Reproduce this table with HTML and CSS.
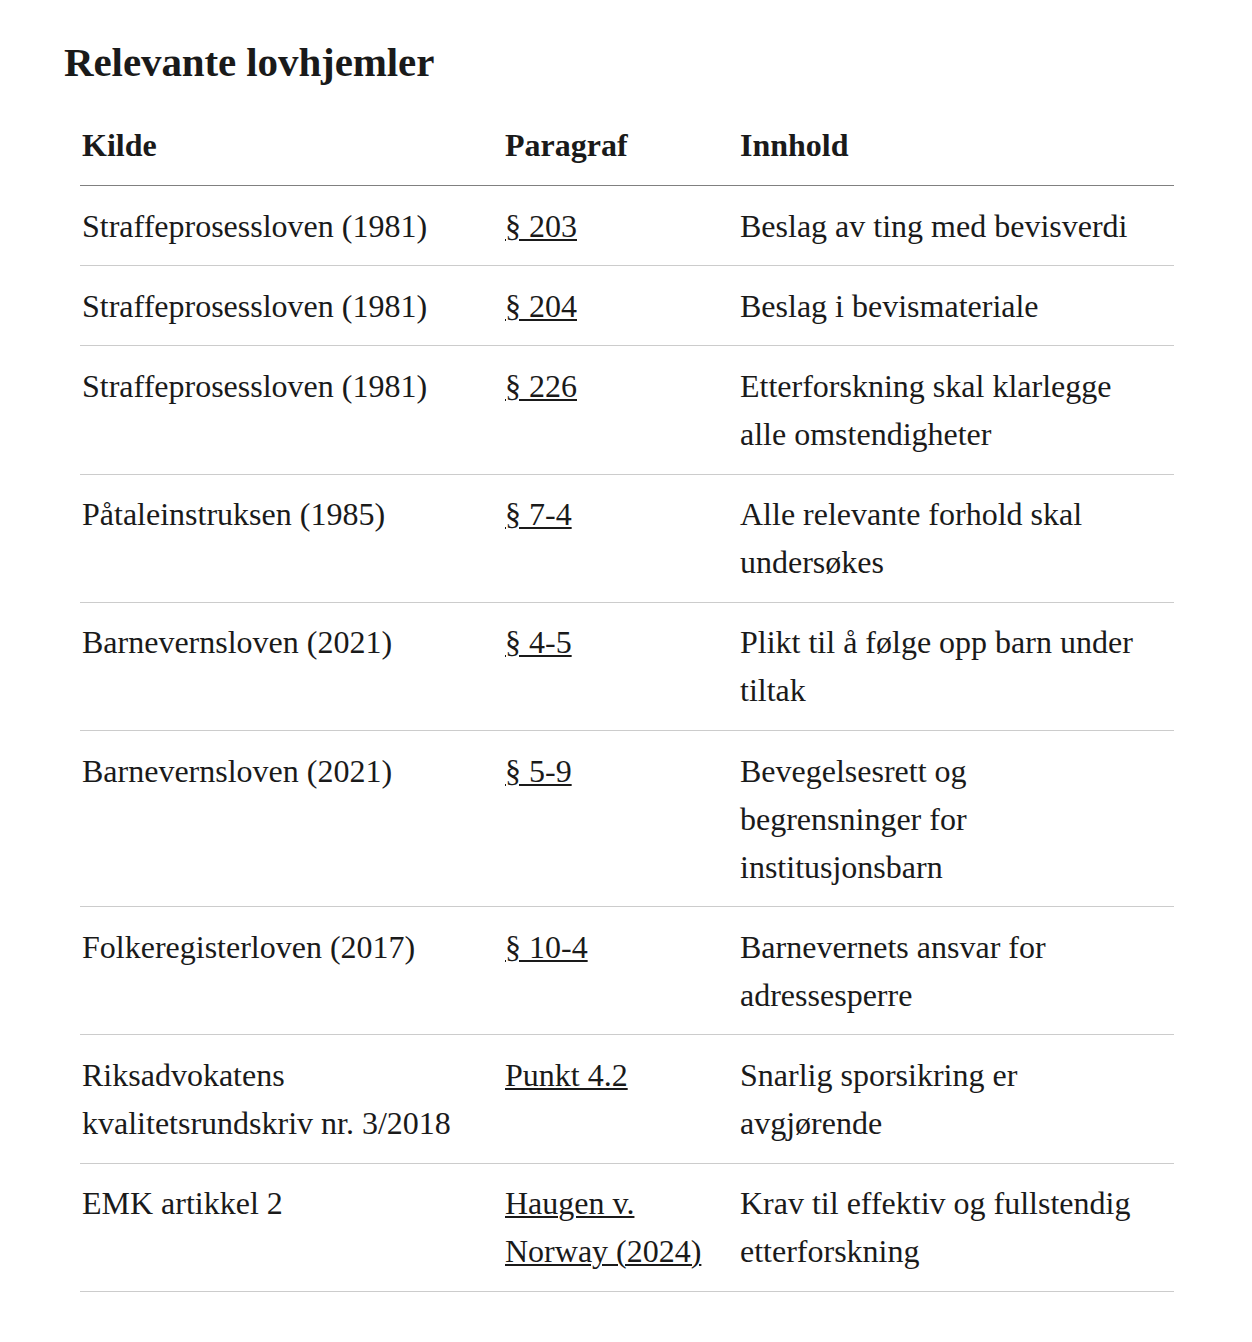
FILE: index.html
```html
<!DOCTYPE html>
<html lang="no">
<head>
<meta charset="utf-8">
<title>Relevante lovhjemler</title>
<link rel="stylesheet" href="styles.css">
</head>
<body>
<main class="page">
  <h2 class="title">Relevante lovhjemler</h2>
  <table class="laws">
    <thead>
      <tr><th class="c1">Kilde</th><th class="c2">Paragraf</th><th class="c3">Innhold</th></tr>
    </thead>
    <tbody>
      <tr><td>Straffeprosessloven (1981)</td><td><a href="#">§ 203</a></td><td>Beslag av ting med bevisverdi</td></tr>
      <tr><td>Straffeprosessloven (1981)</td><td><a href="#">§ 204</a></td><td>Beslag i bevismateriale</td></tr>
      <tr><td>Straffeprosessloven (1981)</td><td><a href="#">§ 226</a></td><td>Etterforskning skal klarlegge alle omstendigheter</td></tr>
      <tr><td>Påtaleinstruksen (1985)</td><td><a href="#">§ 7-4</a></td><td>Alle relevante forhold skal undersøkes</td></tr>
      <tr><td>Barnevernsloven (2021)</td><td><a href="#">§ 4-5</a></td><td>Plikt til å følge opp barn under tiltak</td></tr>
      <tr><td>Barnevernsloven (2021)</td><td><a href="#">§ 5-9</a></td><td>Bevegelsesrett og begrensninger for institusjonsbarn</td></tr>
      <tr><td>Folkeregisterloven (2017)</td><td><a href="#">§ 10-4</a></td><td>Barnevernets ansvar for adressesperre</td></tr>
      <tr><td>Riksadvokatens kvalitetsrundskriv nr. 3/2018</td><td><a href="#">Punkt 4.2</a></td><td>Snarlig sporsikring er avgjørende</td></tr>
      <tr><td>EMK artikkel 2</td><td><a href="#">Haugen v. Norway (2024)</a></td><td>Krav til effektiv og fullstendig etterforskning</td></tr>
    </tbody>
  </table>
</main>
</body>
</html>
```

FILE: styles.css
```css
html, body {
  margin: 0;
  padding: 0;
  background: #ffffff;
}
body {
  font-family: "Liberation Serif", "DejaVu Serif", serif;
  color: #1a1a1a;
}
.page {
  padding: 36px 64px 40px 64px;
}
.title {
  margin: 0 0 17px 0;
  font-size: 41px;
  line-height: 52px;
  font-weight: 700;
  letter-spacing: -0.1px;
}
.laws {
  margin-left: 16px;
  width: 1094px;
  border-collapse: collapse;
  font-size: 32px;
  line-height: 48px;
}
.laws th {
  text-align: left;
  font-weight: 700;
  padding: 16px 2px;
  border-bottom: 1px solid #808080;
}
.laws td {
  vertical-align: top;
  padding: 15.6px 2px;
  border-bottom: 1px solid #cccccc;
}
.laws td:last-child,
.laws th:last-child {
  padding-right: 34px;
}
.c1 { width: 419px; }
.c2 { width: 231px; }
.c3 { width: 400px; }
.laws a {
  color: inherit;
  text-decoration: underline;
  text-decoration-thickness: 2px;
  text-underline-offset: 2px;
}
```
